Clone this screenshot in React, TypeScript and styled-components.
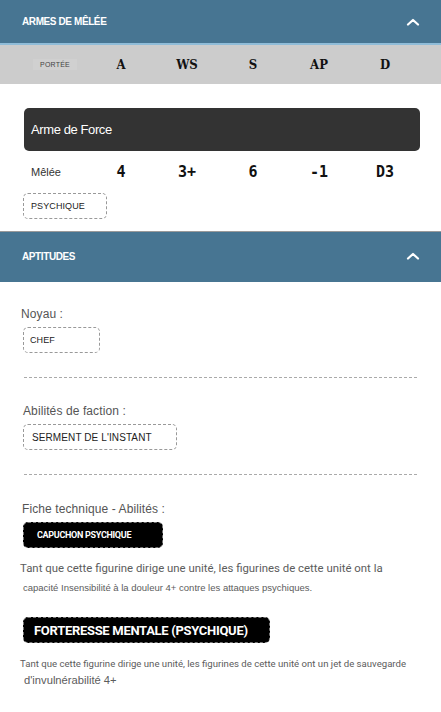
import React from "react";
import styled, { createGlobalStyle } from "styled-components";

const Global = createGlobalStyle`
  html, body { margin: 0; padding: 0; background: #ffffff; }
  body { font-family: "Liberation Sans", Arial, sans-serif; }
  * { box-sizing: border-box; }
`;

const Page = styled.div`
  width: 441px;
  display: flex;
  flex-direction: column;
`;

const SectionHeader = styled.div<{ $h: number; $border: string }>`
  height: ${(p) => p.$h}px;
  background: #477592;
  border-bottom: 2px solid ${(p) => p.$border};
  display: flex;
  align-items: center;
  justify-content: space-between;
  padding: 0 21px 0 22px;
`;

const HeaderTitle = styled.span`
  color: #ffffff;
  font-family: "Liberation Sans", Arial, sans-serif;
  font-weight: 700;
  font-size: 10px;
  letter-spacing: -0.4px;
`;

const Chevron = () => (
  <svg width="14" height="8" viewBox="0 0 14 8">
    <polyline points="2,6.5 7,2 12,6.5" fill="none" stroke="#fff" strokeWidth="2.2" strokeLinecap="round" strokeLinejoin="round" />
  </svg>
);

const StatGrid = styled.div<{ $bg: string; $h: number }>`
  display: grid;
  grid-template-columns: repeat(6, 66px);
  padding: 0 22px;
  height: ${(p) => p.$h}px;
  align-items: center;
  background: ${(p) => p.$bg};
`;

const PorteeLabel = styled.span`
  justify-self: center;
  font-size: 7px;
  color: #444;
  background: #d0d0d0;
  padding: 2px 7px;
  letter-spacing: 0.2px;
`;

const StatHead = styled.span`
  justify-self: center;
  font-family: "DejaVu Serif Condensed", "DejaVu Serif", "Liberation Serif", serif;
  font-weight: 700;
  font-size: 13px;
  color: #111;
`;

const StatValue = styled.span`
  justify-self: center;
  font-family: "DejaVu Sans Mono", "Liberation Mono", monospace;
  font-weight: 700;
  font-size: 15px;
  color: #111;
`;

const RangeLabel = styled.span`
  padding-left: 9px;
  font-size: 11px;
  color: #333;
`;

const WeaponBlock = styled.div`
  padding: 24px 22px 12px 23px;
  display: flex;
  flex-direction: column;
`;

const WeaponCard = styled.div`
  margin-left: 1px;
  height: 43px;
  width: 396px;
  background: #333333;
  border-radius: 5px;
  display: flex;
  align-items: center;
  padding-left: 7px;
  color: #fff;
  font-size: 13px;
  letter-spacing: -0.4px;
`;

const WeaponStats = styled(StatGrid)`
  padding: 0;
  margin-left: -1px;
`;

const Tag = styled.div<{ $dark?: boolean; $w: number; $size: number; $bold?: boolean; $pl: number }>`
  width: ${(p) => p.$w}px;
  height: 26px;
  display: flex;
  align-items: center;
  padding-left: ${(p) => p.$pl}px;
  border: 1px dashed ${(p) => (p.$dark ? "#777" : "#999")};
  border-radius: 5px;
  background: ${(p) => (p.$dark ? "#000" : "#fff")};
  color: ${(p) => (p.$dark ? "#fff" : "#222")};
  font-family: ${(p) => (p.$bold ? `Roboto, "Liberation Sans", sans-serif` : `"Liberation Sans", Arial, sans-serif`)};
  font-size: ${(p) => p.$size}px;
  font-weight: ${(p) => (p.$bold ? 700 : 400)};
  letter-spacing: ${(p) => (p.$bold ? "-0.3px" : "0.1px")};
  white-space: nowrap;
`;

const Divider = styled.div`
  height: 1px;
  background: #9a9a9a;
`;

const Abilities = styled.div`
  padding: 25px 24px 0 20px;
  display: flex;
  flex-direction: column;
`;

const Group = styled.div<{ $labelIndent?: number }>`
  display: flex;
  flex-direction: column;
  align-items: flex-start;
  gap: 6px;
  padding-left: ${(p) => 1 + (p.$labelIndent ?? 0)}px;

  & > div {
    margin-left: ${(p) => 2 - (p.$labelIndent ?? 0)}px;
  }
`;

const Label = styled.span`
  font-size: 12px;
  color: #555;
  letter-spacing: 0.1px;
`;

const DashedSep = styled.div<{ $top: number; $bottom: number }>`
  margin: ${(p) => p.$top}px 0 ${(p) => p.$bottom}px 4px;
  border-top: 1px dashed #aaa;
`;

const Desc = styled.p<{ $lh: number; $top: number }>`
  margin: ${(p) => p.$top}px 0 0;
  color: #5c5c5c;
  line-height: ${(p) => p.$lh}px;
`;

const DescLine = styled.span<{ $size: number; $indent: number; $roboto?: boolean }>`
  display: block;
  font-family: ${(p) => (p.$roboto ? `Roboto, "Liberation Sans", sans-serif` : `"Liberation Sans", Arial, sans-serif`)};
  font-size: ${(p) => p.$size}px;
  padding-left: ${(p) => p.$indent}px;
  white-space: nowrap;
`;

export default function App() {
  return (
    <Page>
      <Global />
      <SectionHeader $h={45} $border="#8fbcd8">
        <HeaderTitle>ARMES DE MÊLÉE</HeaderTitle>
        <Chevron />
      </SectionHeader>
      <StatGrid $bg="#cccccc" $h={39}>
        <PorteeLabel>PORTÉE</PorteeLabel>
        <StatHead>A</StatHead>
        <StatHead>WS</StatHead>
        <StatHead>S</StatHead>
        <StatHead>AP</StatHead>
        <StatHead>D</StatHead>
      </StatGrid>
      <WeaponBlock>
        <WeaponCard>Arme de Force</WeaponCard>
        <WeaponStats $bg="transparent" $h={42}>
          <RangeLabel>Mêlée</RangeLabel>
          <StatValue>4</StatValue>
          <StatValue>3+</StatValue>
          <StatValue>6</StatValue>
          <StatValue>-1</StatValue>
          <StatValue>D3</StatValue>
        </WeaponStats>
        <Tag $w={84} $size={9} $pl={7}>PSYCHIQUE</Tag>
      </WeaponBlock>
      <Divider />
      <SectionHeader $h={50} $border="#477592">
        <HeaderTitle>APTITUDES</HeaderTitle>
        <Chevron />
      </SectionHeader>
      <Abilities>
        <Group>
          <Label>Noyau :</Label>
          <Tag $w={77} $size={9} $pl={6}>CHEF</Tag>
        </Group>
        <DashedSep $top={24} $bottom={26} />
        <Group $labelIndent={2}>
          <Label>Abilités de faction :</Label>
          <Tag $w={154} $size={10} $pl={8}>SERMENT DE L'INSTANT</Tag>
        </Group>
        <DashedSep $top={24} $bottom={27} />
        <Group $labelIndent={1}>
          <Label>Fiche technique - Abilités :</Label>
          <Tag $dark $bold $w={140} $size={9} $pl={13}>CAPUCHON PSYCHIQUE</Tag>
        </Group>
        <Desc $lh={19} $top={11}>
          <DescLine $roboto $size={11.4} $indent={0}>Tant que cette figurine dirige une unité, les figurines de cette unité ont la</DescLine>
          <DescLine $size={9.5} $indent={3}>capacité Insensibilité à la douleur 4+ contre les attaques psychiques.</DescLine>
        </Desc>
        <Group style={{ marginTop: 20 }}>
          <Tag $dark $bold $w={247} $size={13} $pl={10}>FORTERESSE MENTALE (PSYCHIQUE)</Tag>
        </Group>
        <Desc $lh={17} $top={12}>
          <DescLine $roboto $size={9.6} $indent={0}>Tant que cette figurine dirige une unité, les figurines de cette unité ont un jet de sauvegarde</DescLine>
          <DescLine $size={11.2} $indent={4}>d'invulnérabilité 4+</DescLine>
        </Desc>
      </Abilities>
    </Page>
  );
}
